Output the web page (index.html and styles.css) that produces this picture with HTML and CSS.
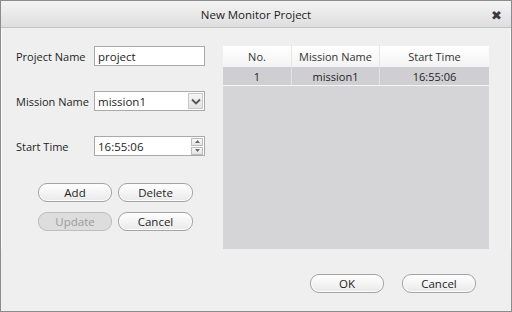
FILE: index.html
```html
<!DOCTYPE html>
<html>
<head>
	<title>New Monitor Project</title>
	<link rel="stylesheet" href="styles.css">
</head>
<body>
	<div id="ventana">
		<div class="titulo">
			<span>New Monitor Project</span>
			<span class="cerrar">&#10006;</span>
		</div>

		<div class="cuerpo">
			<div class="formulario">
				<div class="fila">
					<label>Project Name</label>
					<div class="caja">project</div>
				</div>
				<div class="fila">
					<label>Mission Name</label>
					<div class="caja combo">
						<span>mission1</span>
						<span class="flecha">
							<svg width="10" height="7" viewBox="0 0 10 7"><path d="M1 1.5 L5 5.5 L9 1.5" fill="none" stroke="#555" stroke-width="1.8"/></svg>
						</span>
					</div>
				</div>
				<div class="fila">
					<label>Start Time</label>
					<div class="caja spin">
						<span>16:55:06</span>
						<span class="flechitas">
							<span class="mini"><svg width="5" height="3" viewBox="0 0 5 3"><path d="M0 3 L2.5 0 L5 3Z" fill="#666"/></svg></span>
							<span class="mini"><svg width="5" height="3" viewBox="0 0 5 3"><path d="M0 0 L2.5 3 L5 0Z" fill="#666"/></svg></span>
						</span>
					</div>
				</div>

				<div class="botones">
					<button class="boton">Add</button>
					<button class="boton">Delete</button>
					<button class="boton apagado">Update</button>
					<button class="boton">Cancel</button>
				</div>
			</div>

			<div class="tabla">
				<div class="cabecera">
					<div class="c1">No.</div>
					<div class="c2">Mission Name</div>
					<div class="c3">Start Time</div>
				</div>
				<div class="renglon">
					<div class="c1">1</div>
					<div class="c2">mission1</div>
					<div class="c3">16:55:06</div>
				</div>
			</div>
		</div>

		<div class="pie">
			<button class="boton">OK</button>
			<button class="boton">Cancel</button>
		</div>
	</div>
</body>
</html>
```

FILE: styles.css
```css
*{box-sizing: border-box;}
body{
	margin: 0;
	font-family: "Open Sans", "DejaVu Sans", sans-serif;
	font-size: 11px;
	color: #1e1e1e;
}
#ventana{
	width: 512px;
	height: 312px;
	border: 1px solid #8c8c8c;
	background: #efefef;
	display: flex;
	flex-direction: column;
}
.titulo{
	height: 27px;
	flex-shrink: 0;
	position: relative;
	display: flex;
	align-items: center;
	justify-content: center;
	background: linear-gradient(#f4f4f4, #dedede);
	border-bottom: 1px solid #c4c4c4;
	font-size: 11.5px;
	color: #222;
}
.cerrar{
	position: absolute;
	right: 9px;
	top: 5px;
	font-size: 13px;
	font-weight: bold;
	color: #3a3a3a;
}
.cuerpo{
	display: flex;
	padding: 18px 21px 0 14px;
	border-left: 1px solid #fafafa;
	border-right: 1px solid #fafafa;
}
.formulario{
	width: 189px;
	margin-right: 18px;
	display: flex;
	flex-direction: column;
}
.fila{
	display: flex;
	align-items: center;
	height: 20px;
	margin-bottom: 25px;
}
.fila label{ width: 78px; }
.caja{
	width: 111px;
	height: 20px;
	border: 1px solid #a9a9a9;
	background: #fff;
	padding-left: 3px;
	display: flex;
	align-items: center;
	font-size: 11.5px;
}
.combo{ justify-content: space-between; padding-right: 1px; }
.flecha{
	width: 15px;
	height: 16px;
	display: flex;
	align-items: center;
	justify-content: center;
	background: linear-gradient(#f6f6f6, #e2e2e2);
	border: 1px solid #c8c8c8;
}
.spin{ justify-content: space-between; padding-right: 1px; }
.flechitas{
	display: flex;
	flex-direction: column;
	gap: 1px;
}
.mini{
	width: 12px;
	height: 8px;
	border: 1px solid #bcbcbc;
	background: linear-gradient(#f8f8f8, #e4e4e4);
	display: flex;
	align-items: center;
	justify-content: center;
}
.botones{
	display: grid;
	grid-template-columns: 74px 75px;
	column-gap: 6px;
	row-gap: 10px;
	margin: 2px 0 0 22px;
}
.boton{
	height: 19px;
	border: 1px solid #a4a4a4;
	border-radius: 9px;
	background: linear-gradient(#ffffff, #e9e9e9);
	font-family: inherit;
	font-size: 11.5px;
	color: #1e1e1e;
	padding: 0;
	box-shadow: inset 0 0 0 1px #fcfcfc;
}
.apagado{
	background: #dddddd;
	color: #9a9a9a;
	border-color: #bdbdbd;
	box-shadow: none;
}
.tabla{
	width: 267px;
	height: 203px;
	background: #d5d5d7;
}
.cabecera, .renglon{
	display: flex;
	text-align: center;
}
.cabecera{
	height: 21px;
	align-items: center;
	background: linear-gradient(#ffffff, #f3f3f3);
	color: #333;
}
.renglon{
	height: 19px;
	align-items: center;
	background: #cfcfd3;
	border-bottom: 1px solid #f4f4f4;
}
.cabecera div, .renglon div{
	height: 100%;
	display: flex;
	align-items: center;
	justify-content: center;
}
.c1{ width: 69px; border-right: 1px solid #e6e6e6; }
.c2{ width: 88px; border-right: 1px solid #e6e6e6; }
.c3{ flex: 1; }
.renglon .c1, .renglon .c2{ border-right-color: #e2e2e4; }
.pie{
	display: flex;
	justify-content: flex-end;
	gap: 18px;
	padding: 25px 35px 0 0;
}
.pie .boton{ width: 74px; }
```
